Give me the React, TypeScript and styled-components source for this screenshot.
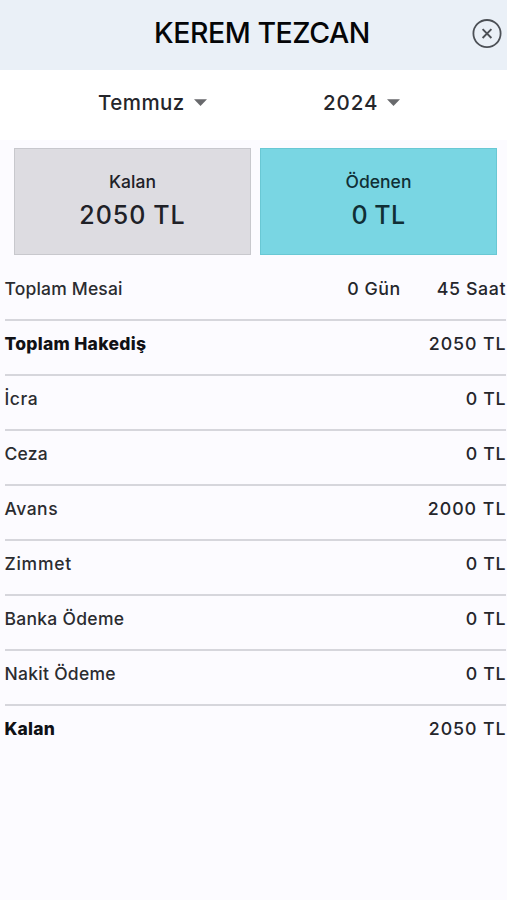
import React from "react";
import styled, { createGlobalStyle } from "styled-components";

const GlobalStyle = createGlobalStyle`
  *, *::before, *::after { box-sizing: border-box; }
  body {
    margin: 0;
    background: #fcfbff;
    color: #25262b;
    font-family: Inter, "Liberation Sans", sans-serif;
    font-weight: 450;
  }
`;

const Screen = styled.main`
  display: flex;
  flex-direction: column;
  min-height: 900px;
  overflow: hidden;
`;

const Header = styled.header`
  display: grid;
  grid-template-columns: 48px 1fr 48px;
  align-items: center;
  height: 70px;
  padding: 0 5px 3px 22px;
  background: #eaf0f7;
`;

const Title = styled.h1`
  margin: 0;
  padding-bottom: 2px;
  text-align: center;
  white-space: nowrap;
  color: #050608;
  font-size: 28.5px;
  line-height: 34px;
  font-weight: 550;
  letter-spacing: -0.45px;
`;

const CloseButton = styled.button`
  display: flex;
  justify-self: end;
  padding: 0;
  border: 0;
  background: none;
  color: #4c5056;
`;

const Filters = styled.div`
  display: flex;
  height: 70px;
  padding: 0 0 5px 98px;
  align-items: center;
  background: #fff;
`;

const Select = styled.button<{ $width: number; $spacing: number }>`
  display: flex;
  flex-shrink: 0;
  align-items: center;
  justify-content: space-between;
  width: ${(p) => p.$width}px;
  margin-right: 116px;
  padding: 0;
  border: 0;
  background: none;
  color: #25262b;
  font: inherit;
  font-size: 20.5px;
  line-height: 26px;
  letter-spacing: ${(p) => p.$spacing}px;
  white-space: nowrap;
`;

const Cards = styled.section`
  display: grid;
  grid-template-columns: 237px 237px;
  gap: 9px;
  padding: 8px 0 0 14px;
`;

const Card = styled.article<{ $paid?: boolean }>`
  display: flex;
  flex-direction: column;
  align-items: center;
  height: 107px;
  padding-top: 21px;
  border: 1px solid ${(p) => (p.$paid ? "#69c8d4" : "#c8c8cd")};
  background: ${(p) => (p.$paid ? "#79d6e3" : "#dddce1")};
  color: ${(p) => (p.$paid ? "#102f35" : "#202127")};
`;

const CardLabel = styled.span`
  font-size: 17.5px;
  line-height: 24px;
`;

const CardValue = styled.strong<{ $spacing: number }>`
  margin-top: 5px;
  font-size: 25px;
  line-height: 32px;
  font-weight: 500;
  letter-spacing: ${(p) => p.$spacing}px;
  word-spacing: -1px;
`;

const List = styled.section`
  display: flex;
  flex-direction: column;
  padding: 11px 1px 0 5px;
`;

const Row = styled.div`
  display: flex;
  justify-content: space-between;
  height: 55px;
  padding-top: 11px;
  border-bottom: 2px solid #d6d6dc;
  font-size: 17.5px;
  line-height: 24px;
  white-space: nowrap;
  &:last-child { border-bottom: 0; }
`;

const Label = styled.span<{ $bold?: boolean; $spacing: number }>`
  margin-left: -0.5px;
  font-weight: ${(p) => (p.$bold ? 800 : 450)};
  color: ${(p) => (p.$bold ? "#101115" : "#2b2c30")};
  letter-spacing: ${(p) => p.$spacing}px;
`;

const Values = styled.div`
  display: flex;
  gap: 36px;
`;

const Value = styled.span<{ $spacing: number }>`
  font-size: 17.8px;
  letter-spacing: ${(p) => p.$spacing}px;
  margin-right: ${(p) => 0.5 - p.$spacing}px;
`;

const Caret = () => (
  <svg width="13" height="7" viewBox="0 0 13 7" aria-hidden="true">
    <path d="M0 0.2H13L6.5 7Z" fill="#68696c" />
  </svg>
);

type Amount = { text: string; spacing: number };
type Entry = { label: string; spacing: number; bold?: boolean; values: Amount[] };

const zero: Amount = { text: "0 TL", spacing: 0.6 };

const entries: Entry[] = [
  {
    label: "Toplam Mesai",
    spacing: 0.18,
    values: [
      { text: "0 Gün", spacing: 0.55 },
      { text: "45 Saat", spacing: 0.6 },
    ],
  },
  { label: "Toplam Hakediş", spacing: 0.28, bold: true, values: [{ text: "2050 TL", spacing: 0.9 }] },
  { label: "İcra", spacing: 0.6, values: [zero] },
  { label: "Ceza", spacing: 0.2, values: [zero] },
  { label: "Avans", spacing: 0.5, values: [{ text: "2000 TL", spacing: 1 }] },
  { label: "Zimmet", spacing: 0.75, values: [zero] },
  { label: "Banka Ödeme", spacing: 0.28, values: [zero] },
  { label: "Nakit Ödeme", spacing: 0.28, values: [zero] },
  { label: "Kalan", spacing: 0.2, bold: true, values: [{ text: "2050 TL", spacing: 0.9 }] },
];

export default function App() {
  return (
    <Screen>
      <GlobalStyle />
      <Header>
        <span />
        <Title>KEREM TEZCAN</Title>
        <CloseButton aria-label="Kapat">
          <svg width="30" height="30" viewBox="0 0 30 30" fill="none" stroke="currentColor">
            <circle cx="15" cy="14.6" r="13.6" strokeWidth="1.8" />
            <path d="M10.6 10.2L19.4 19M19.4 10.2L10.6 19" strokeWidth="1.9" />
          </svg>
        </CloseButton>
      </Header>
      <Filters>
        <Select $width={109} $spacing={0.45}>Temmuz<Caret /></Select>
        <Select $width={77} $spacing={0.9}>2024<Caret /></Select>
      </Filters>
      <Cards>
        <Card>
          <CardLabel>Kalan</CardLabel>
          <CardValue $spacing={1.05}>2050 TL</CardValue>
        </Card>
        <Card $paid>
          <CardLabel>Ödenen</CardLabel>
          <CardValue $spacing={0.4}>0 TL</CardValue>
        </Card>
      </Cards>
      <List>
        {entries.map((entry) => (
          <Row key={entry.label}>
            <Label $bold={entry.bold} $spacing={entry.spacing}>{entry.label}</Label>
            <Values>
              {entry.values.map((v) => (
                <Value key={v.text} $spacing={v.spacing}>{v.text}</Value>
              ))}
            </Values>
          </Row>
        ))}
      </List>
    </Screen>
  );
}
